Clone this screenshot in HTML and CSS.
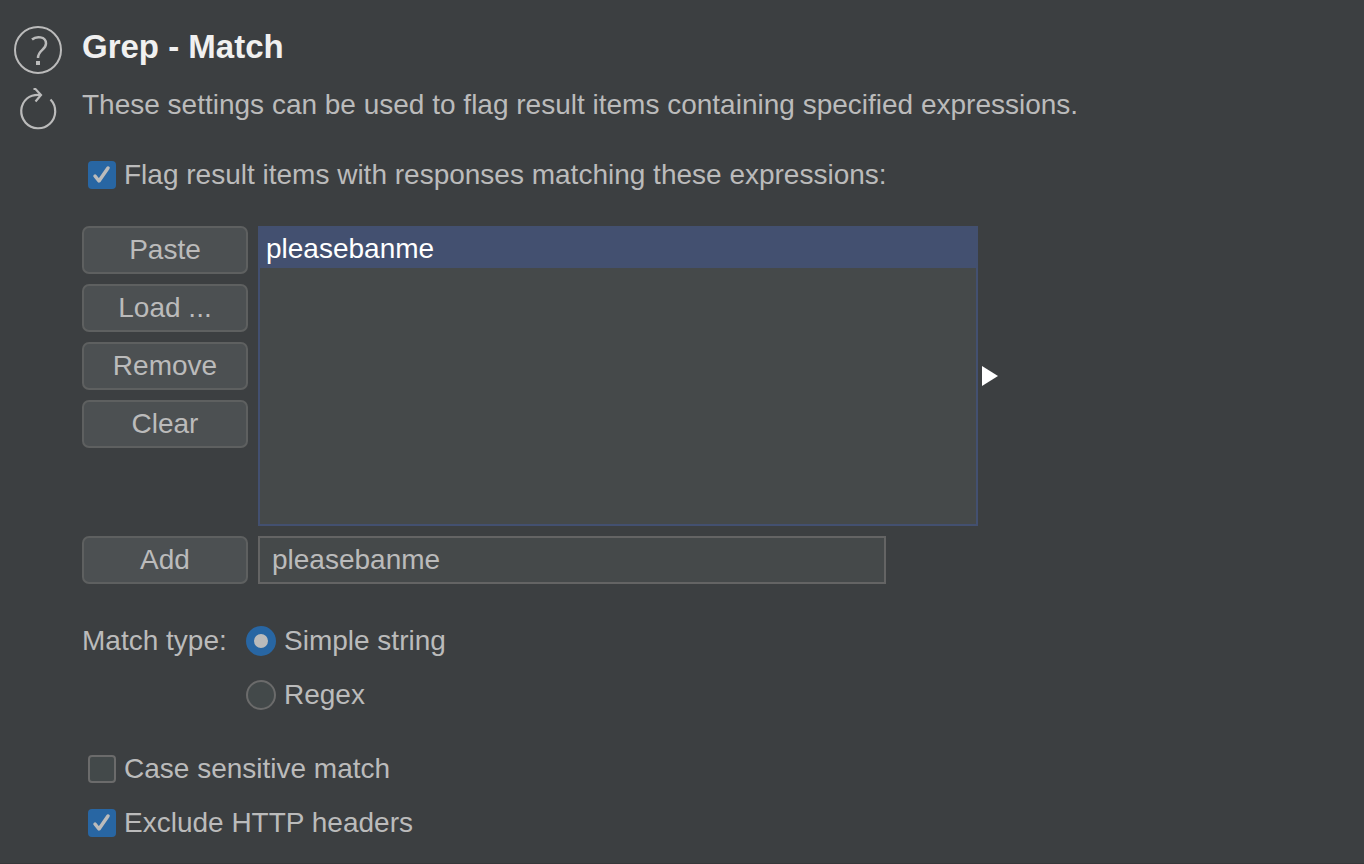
FILE: index.html
```html
<!DOCTYPE html>
<html lang="en">
<head>
    <meta charset="UTF-8">
    <meta name="viewport" content="width=device-width, initial-scale=1.0">
    <title>Grep - Match</title>
    <link rel="stylesheet" href="styles.css">
</head>
<body>

<div class="panel">
    <!-- Help and reset icons -->
    <div class="tools">
        <button class="tool" type="button" aria-label="Help">
            <svg width="48" height="48" viewBox="0 0 48 48" fill="none" stroke="currentColor" stroke-width="2">
                <circle cx="24" cy="24" r="23" />
                <path d="M18 13.500C22 10 32 10 32 17.500C32 24 24 24 24 32" stroke-width="2.500" />
                <rect x="22" y="35" width="4" height="4" fill="currentColor" stroke="none" />
            </svg>
        </button>
        <button class="tool" type="button" aria-label="Restore defaults">
            <svg width="48" height="48" viewBox="0 0 48 48" fill="none" stroke="currentColor" stroke-width="2.200">
                <path d="M36.500 15.500A17 17 0 1 1 13 14.500Q18 10.500 26 11" />
                <path d="M19.500 5L21.500 5L27 11L21.500 17.500" />
            </svg>
        </button>
    </div>

    <form class="settings">
        <h1>Grep - Match</h1>
        <p>These settings can be used to flag result items containing specified expressions.</p>

        <label class="option">
            <input type="checkbox" checked>
            Flag result items with responses matching these expressions:
        </label>

        <!-- Expression list -->
        <div class="editor">
            <div class="buttons">
                <button class="btn" type="button">Paste</button>
                <button class="btn" type="button">Load ...</button>
                <button class="btn" type="button">Remove</button>
                <button class="btn" type="button">Clear</button>
            </div>
            <ul class="list">
                <li class="selected">pleasebanme</li>
            </ul>
            <svg class="marker" width="16" height="20" viewBox="0 0 16 20">
                <path d="M0 0L16 10L0 20Z" fill="#fff" />
            </svg>
            <button class="btn" type="button">Add</button>
            <input class="entry" type="text" aria-label="New expression" value="pleasebanme">
        </div>

        <!-- Match type -->
        <div class="match" role="radiogroup" aria-labelledby="matchType">
            <span class="match-label" id="matchType">Match type:</span>
            <div class="choices">
                <label class="option"><input type="radio" name="type" checked> Simple string</label>
                <label class="option"><input type="radio" name="type"> Regex</label>
            </div>
        </div>

        <div class="choices flags">
            <label class="option"><input type="checkbox"> Case sensitive match</label>
            <label class="option"><input type="checkbox" checked> Exclude HTTP headers</label>
        </div>
    </form>
</div>

</body>
</html>
```

FILE: styles.css
```css
* {
    box-sizing: border-box;
}
body {
    margin: 0;
    background-color: #3c3f41;
    color: #bbb;
    font-family: "Liberation Sans", Arial, sans-serif;
    font-size: 28px;
    line-height: 34px;
}
.panel {
    display: flex;
    gap: 20px;
    min-height: 100vh;
    padding: 26px 14px 0;
    border-bottom: 1px solid #363739;
}
.tools {
    display: flex;
    flex-direction: column;
    gap: 10px;
}
.tool {
    padding: 0;
    border: none;
    background: none;
    color: #bbb;
}
.tool svg {
    display: block;
}
.settings {
    flex: 1;
    min-width: 0;
    padding-top: 4px;
}
h1 {
    margin: 0 0 24px;
    color: #f0f0f0;
    font-size: 33px;
    line-height: 34px;
}
p {
    margin: 0 0 36px;
}
.option {
    display: flex;
    align-items: center;
    gap: 8px;
    padding-left: 6px;
}
input[type="checkbox"],
input[type="radio"] {
    flex: none;
    appearance: none;
    width: 28px;
    height: 28px;
    margin: 0;
    border: 2px solid #6b6b6b;
    border-radius: 4px;
    background-color: #43494a;
}
input[type="checkbox"]:checked {
    border: none;
    background: #2866a3 url("data:image/svg+xml,%3Csvg xmlns='http://www.w3.org/2000/svg' viewBox='0 0 28 28'%3E%3Cpath d='M7 15L11 20L20 7' fill='none' stroke='%23bbb' stroke-width='3.500' stroke-linecap='round' stroke-linejoin='round'/%3E%3C/svg%3E") center / 28px no-repeat;
}
input[type="radio"] {
    width: 30px;
    height: 30px;
    border-radius: 50%;
}
input[type="radio"]:checked {
    border: 8px solid #2866a3;
    background: #bbb;
}
.editor {
    display: grid;
    grid-template-columns: 166px minmax(0, 720px) auto;
    gap: 10px;
    justify-content: start;
    margin-top: 34px;
}
.buttons {
    display: flex;
    flex-direction: column;
    gap: 10px;
}
.btn {
    width: 100%;
    height: 48px;
    padding: 0;
    border: 2px solid #5e6060;
    border-radius: 7px;
    background-color: #4c5052;
    color: #bbb;
    font: inherit;
}
.list {
    min-height: 300px;
    margin: 0;
    padding: 0;
    border: 2px solid #435070;
    background-color: #45494a;
    list-style: none;
}
.list li {
    padding: 4px 6px 2px;
}
.list .selected {
    background-color: #435070;
    color: #fff;
}
.marker {
    align-self: center;
    margin-left: -6px;
}
.entry {
    width: 628px;
    max-width: 100%;
    height: 48px;
    padding: 0 12px;
    border: 2px solid #646464;
    border-radius: 0;
    background-color: #45494a;
    color: #bbb;
    font: inherit;
}
.match {
    display: flex;
    gap: 8px;
    margin-top: 40px;
}
.match-label {
    min-width: 150px;
}
.choices {
    display: flex;
    flex-direction: column;
    gap: 20px;
}
.flags {
    margin-top: 40px;
}
```
